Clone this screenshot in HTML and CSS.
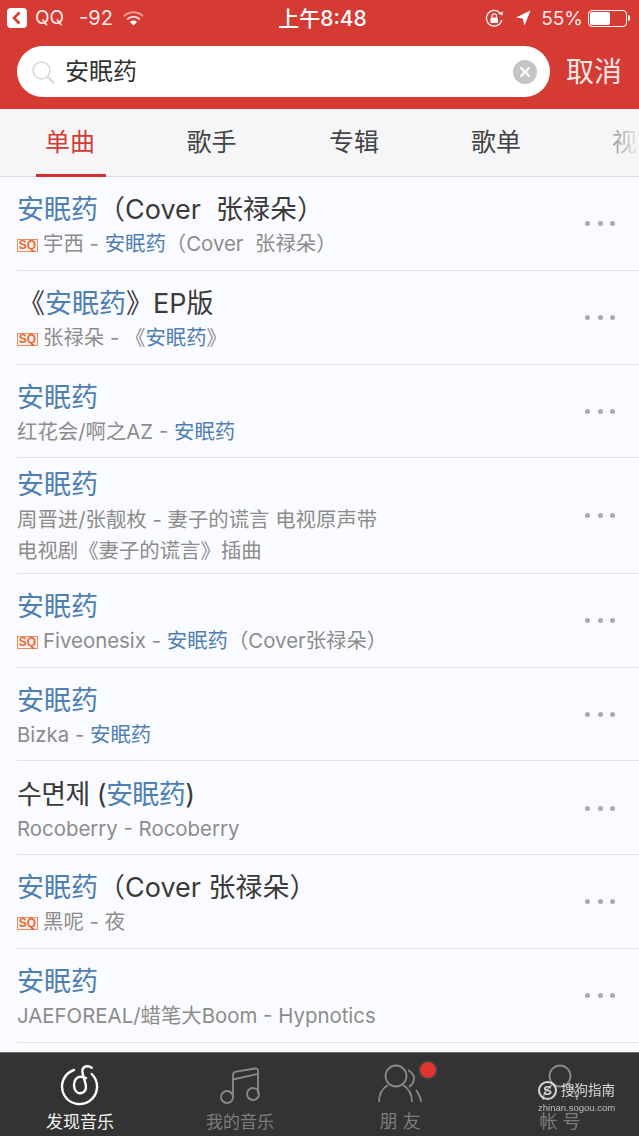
FILE: index.html
```html
<!DOCTYPE html>
<html lang="zh-CN">
<head>
<meta charset="utf-8">
<title>搜索</title>
<link rel="stylesheet" href="styles.css">
</head>
<body>
<div class="phone">
  <header class="head">
    <div class="status">
      <div class="status-left">
        <span class="back"><svg width="20" height="20" viewBox="0 0 20 20"><path d="M12.5 4.5 7 10l5.5 5.5" fill="none" stroke="#d63a32" stroke-width="2.6"/></svg></span>
        <span class="qq">QQ</span>
        <span class="signal">-92</span>
        <svg class="wifi" width="21" height="15" viewBox="0 0 21 15"><path d="M1 5.2a13.5 13.5 0 0 1 19 0" fill="none" stroke="#e99a94" stroke-width="2"/><path d="M4.2 8.4a9 9 0 0 1 12.6 0" fill="none" stroke="#f8d5d2" stroke-width="2"/><path d="M10.5 14.5 7 11a5 5 0 0 1 7 0z" fill="#fff"/></svg>
      </div>
      <div class="time">上午8:48</div>
      <div class="status-right">
        <svg width="19" height="19" viewBox="0 0 19 19"><path d="M16.8 11A7.8 7.8 0 1 1 15 4" fill="none" stroke="#fff" stroke-width="1.3"/><path d="m13 4.5 4.5 2 .3-4z" fill="#fff"/><rect x="5.5" y="8.5" width="7.5" height="5.5" rx="1" fill="#fff"/><path d="M7 8.5V7a2.2 2.2 0 0 1 4.5 0v1.5" fill="none" stroke="#fff" stroke-width="1.2"/></svg>
        <svg class="arrow" width="16" height="16" viewBox="0 0 16 16"><path d="M15.5.5 1 7.5l6.7.9L9.5 15.500z" fill="#fff"/></svg>
        <span class="pct">55%</span>
        <span class="battery"><span class="battery-fill"></span></span>
        <span class="battery-nub"></span>
      </div>
    </div>
    <div class="search-row">
      <div class="search">
        <svg width="26" height="26" viewBox="0 0 26 26"><circle cx="11.500" cy="11.500" r="8.500" fill="none" stroke="#d6d6d6" stroke-width="1.500"/><path d="m18 18 6 6" stroke="#d6d6d6" stroke-width="1.800"/></svg>
        <span class="query">安眠药</span>
        <span class="clear"><svg width="12" height="12" viewBox="0 0 12 12"><path d="m1.500 1.500 9 9m0-9-9 9" stroke="#fff" stroke-width="2.200"/></svg></span>
      </div>
      <span class="cancel">取消</span>
    </div>
  </header>

  <nav class="tabs">
    <div class="tab tab-active"><span>单曲</span></div>
    <div class="tab tab-wide"><span>歌手</span></div>
    <div class="tab"><span>专辑</span></div>
    <div class="tab"><span>歌单</span></div>
    <div class="tab tab-faded"><span>视</span></div>
  </nav>

  <main class="list">
    <div class="row">
      <div class="info">
        <div class="title"><b>安眠药</b>（Cover&nbsp; 张禄朵）</div>
        <div class="sub"><i class="sq">SQ</i>宇西 - <b>安眠药</b>（Cover&nbsp; 张禄朵）</div>
      </div>
      <div class="dots"><i></i><i></i><i></i></div>
    </div>
    <div class="row">
      <div class="info">
        <div class="title title-book">《<b>安眠药</b>》EP版</div>
        <div class="sub"><i class="sq">SQ</i>张禄朵 - 《<b>安眠药</b>》</div>
      </div>
      <div class="dots"><i></i><i></i><i></i></div>
    </div>
    <div class="row">
      <div class="info">
        <div class="title"><b>安眠药</b></div>
        <div class="sub">红花会/啊之AZ - <b>安眠药</b></div>
      </div>
      <div class="dots"><i></i><i></i><i></i></div>
    </div>
    <div class="row row-tall">
      <div class="info">
        <div class="title"><b>安眠药</b></div>
        <div class="sub">周晋进/张靓枚 - 妻子的谎言 电视原声带</div>
        <div class="sub">电视剧《妻子的谎言》插曲</div>
      </div>
      <div class="dots"><i></i><i></i><i></i></div>
    </div>
    <div class="row">
      <div class="info">
        <div class="title"><b>安眠药</b></div>
        <div class="sub"><i class="sq">SQ</i>Fiveonesix - <b>安眠药</b>（Cover张禄朵）</div>
      </div>
      <div class="dots"><i></i><i></i><i></i></div>
    </div>
    <div class="row">
      <div class="info">
        <div class="title"><b>安眠药</b></div>
        <div class="sub">Bizka - <b>安眠药</b></div>
      </div>
      <div class="dots"><i></i><i></i><i></i></div>
    </div>
    <div class="row">
      <div class="info">
        <div class="title title-ko">수면제 (<b>安眠药</b>)</div>
        <div class="sub">Rocoberry - Rocoberry</div>
      </div>
      <div class="dots"><i></i><i></i><i></i></div>
    </div>
    <div class="row">
      <div class="info">
        <div class="title"><b>安眠药</b>（Cover 张禄朵）</div>
        <div class="sub"><i class="sq">SQ</i>黑呢 - 夜</div>
      </div>
      <div class="dots"><i></i><i></i><i></i></div>
    </div>
    <div class="row">
      <div class="info">
        <div class="title"><b>安眠药</b></div>
        <div class="sub">JAEFOREAL/蜡笔大Boom - Hypnotics</div>
      </div>
      <div class="dots"><i></i><i></i><i></i></div>
    </div>
  </main>

  <footer class="bar">
    <div class="bar-item bar-on">
      <svg width="44" height="44" viewBox="0 0 44 44"><g fill="none" stroke="#fff" stroke-width="2.400" stroke-linecap="round"><path d="M16 8A17.500 17.500 0 1 0 33.700 12"/><path d="M33.700 5.700C31 3.500 26 3.500 24.500 7.500C23.500 11 26.500 17 27.800 23C28.800 28 26 31.300 22 31.300C18.500 31.300 16 27.500 16 23C16 18 19 14.700 22 14.700C24.500 14.700 26.500 15 28 16"/></g></svg>
      <span>发现音乐</span>
    </div>
    <div class="bar-item">
      <svg width="44" height="44" viewBox="0 0 44 44"><g fill="none" stroke="#8a8a8a" stroke-width="1.800"><circle cx="9" cy="35" r="6"/><circle cx="35" cy="32" r="6"/><path d="M15 35V13c0-2 1-3 3-3.300L37 6.500c2-.3 3 .5 3 2.500V32"/><path d="m15 17.500 25-5.500"/></g></svg>
      <span>我的音乐</span>
    </div>
    <div class="bar-item">
      <svg width="44" height="44" viewBox="0 0 44 44"><g fill="none" stroke="#8a8a8a" stroke-width="1.800"><circle cx="18" cy="14" r="10.500"/><path d="M1 40c0-8 4-14 9-17M25 23c5 3 9 9 9 17"/><path d="M30 8c3 2 6 5 6 8s-2 7-5 9M38 28c2 3 5 7 5 12"/></g></svg>
      <span class="spaced">朋 友</span>
      <span class="badge"></span>
    </div>
    <div class="bar-item">
      <svg width="44" height="44" viewBox="0 0 44 44"><g fill="none" stroke="#8a8a8a" stroke-width="1.800"><circle cx="22" cy="14" r="10.500"/><path d="M5 38c0-6 4-12 9-15M30 23c5 3 9 9 9 15"/></g></svg>
      <span class="spaced">帐 号</span>
    </div>
  </footer>

  <div class="mark">
    <div class="mark-top">
      <span class="mark-logo">S</span>
      <span>搜狗指南</span>
    </div>
    <div class="mark-url">zhinan.sogou.com</div>
  </div>
</div>
</body>
</html>
```
FILE: styles.css
```css
* { box-sizing: border-box; }
html, body { margin: 0; padding: 0; }
body {
  width: 639px;
  height: 1136px;
  overflow: hidden;
  font-family: Inter, "Noto Sans CJK SC", "Noto Sans CJK KR", sans-serif;
  color: #333;
}
.phone {
  position: relative;
  width: 639px;
  height: 1136px;
  display: flex;
  flex-direction: column;
  overflow: hidden;
  background: #fafbfe;
}

/* header */
.head {
  flex: none;
  height: 109px;
  background: #d53a33;
  color: #fff;
}
.status {
  height: 36px;
  display: grid;
  grid-template-columns: 1fr auto 1fr;
  align-items: center;
  font-size: 19px;
  color: #fbe9e8;
}
.status-left, .status-right { display: flex; align-items: center; }
.status-left { padding-left: 7px; }
.status-right { justify-content: flex-end; padding-right: 9px; }
.back {
  width: 20px;
  height: 20px;
  border-radius: 4px;
  background: #fff;
  display: flex;
  margin-right: 8px;
}
.qq { margin-bottom: 1px; }
.signal { margin: 0 0 1px 15px; font-size: 20px; }
.wifi { margin-left: 10px; }
.time { font-size: 21px; font-weight: 500; color: #fff; margin: 0 0 3px 6px; }
.arrow { margin-left: 11px; }
.pct { margin-left: 10px; margin-right: 5px; }
.battery {
  width: 39px;
  height: 17px;
  border: 1px solid #fff;
  border-radius: 4px;
  padding: 1px;
  display: flex;
}
.battery-fill { width: 20px; background: #fff; border-radius: 2px; }
.battery-nub { width: 2px; height: 6px; margin-left: 1px; background: #fbe9e8; border-radius: 0 2px 2px 0; }

.search-row {
  display: flex;
  align-items: center;
  padding: 10px 0 0 17px;
}
.search {
  width: 533px;
  height: 51px;
  border-radius: 26px;
  background: #fff;
  display: flex;
  align-items: center;
  padding: 0 13px;
  color: #333;
}
.query { margin-left: 9px; font-size: 24px; line-height: 32px; flex: 1; }
.clear {
  width: 24px;
  height: 24px;
  border-radius: 50%;
  background: #c4c4c4;
  display: flex;
  align-items: center;
  justify-content: center;
}
.cancel { margin-left: 16px; font-size: 28px; line-height: 38px; color: #fbe9e8; }

/* tabs */
.tabs {
  flex: none;
  height: 68px;
  display: flex;
  background: #f6f6f8;
  border-bottom: 1px solid #dcdcde;
  font-size: 25px;
  color: #444;
}
.tab {
  position: relative;
  flex: none;
  width: 142px;
  display: flex;
  align-items: center;
  justify-content: center;
  padding-bottom: 5px;
}
.tab:first-child { width: 140px; }
.tab-wide { width: 143px; }
.tab-active { color: #d23c35; }
.tab-active::after {
  content: "";
  position: absolute;
  left: 36px;
  right: 34px;
  bottom: -1px;
  height: 3px;
  background: #d0302b;
}
.tab-faded { width: 70px; justify-content: flex-start; padding-left: 45px; }
.tab-faded span {
  background: linear-gradient(to right, #999, #e4e4e6);
  -webkit-background-clip: text;
  background-clip: text;
  color: transparent;
}

/* list */
.list {
  flex: 1;
  min-height: 0;
  overflow: hidden;
  padding-left: 17px;
}
.row {
  height: 93.75px;
  display: flex;
  align-items: center;
  border-bottom: 1px solid #e4e4e7;
  padding-top: 5px;
}
.row-tall { height: 115.5px; padding-top: 2px; }
.info { flex: 1; min-width: 0; }
.title {
  font-size: 27px;
  line-height: 36px;
  color: #3a3a3a;
  white-space: nowrap;
}
.title-book { margin-left: 1px; }
.title-ko { letter-spacing: -.6px; }
.sub {
  font-size: 20.4px;
  line-height: 31px;
  color: #8c8c8c;
  white-space: nowrap;
}
.row-tall .title { margin-bottom: 1px; }
.title b, .sub b { font-weight: 400; color: #4f7fb2; }
.sq {
  display: inline-block;
  vertical-align: 2px;
  width: 21px;
  height: 13px;
  margin-right: 5px;
  border: 1px solid #ee8a64;
  background: #fff4ee;
  color: #ea6636;
  font-size: 12px;
  font-style: normal;
  font-weight: 700;
  line-height: 11px;
  text-align: center;
  font-family: "Liberation Sans", sans-serif;
}
.dots {
  flex: none;
  display: flex;
  gap: 7.500px;
  padding-right: 24px;
  margin-bottom: 4px;
}
.row-tall .dots { margin-bottom: 2px; }
.dots i { width: 5px; height: 5px; border-radius: 50%; background: #ababad; }

/* bottom bar */
.bar {
  flex: none;
  height: 84px;
  background: #333;
  border-top: 1px solid #6a6a6a;
  display: grid;
  grid-template-columns: repeat(4, 160px);
  padding-top: 9px;
}
.bar-item {
  position: relative;
  display: flex;
  flex-direction: column;
  align-items: center;
  font-size: 17px;
  line-height: 24px;
  color: #7d7d7d;
}
.bar-item svg { margin-bottom: 4px; }
.bar-on { color: #f2f2f2; }
.spaced { font-size: 18px; }
.badge {
  position: absolute;
  left: 98px;
  top: -2px;
  width: 20px;
  height: 20px;
  border-radius: 50%;
  background: #e2352f;
  border: 2px solid #3d4040;
}

/* watermark */
.mark {
  position: absolute;
  left: 538px;
  top: 1080px;
  color: #e8e8e8;
  opacity: .9;
}
.mark-top {
  display: flex;
  align-items: center;
  font-size: 13.500px;
  line-height: 20px;
  gap: 4px;
}
.mark-logo {
  width: 19px;
  height: 19px;
  border-radius: 50%;
  border: 2px solid #e8e8e8;
  font: 700 13px/15px "Liberation Sans", sans-serif;
  text-align: center;
}
.mark-url {
  font: 9.500px/12px "Liberation Sans", sans-serif;
  margin-top: 2px;
  color: #cfcfcf;
}
```
